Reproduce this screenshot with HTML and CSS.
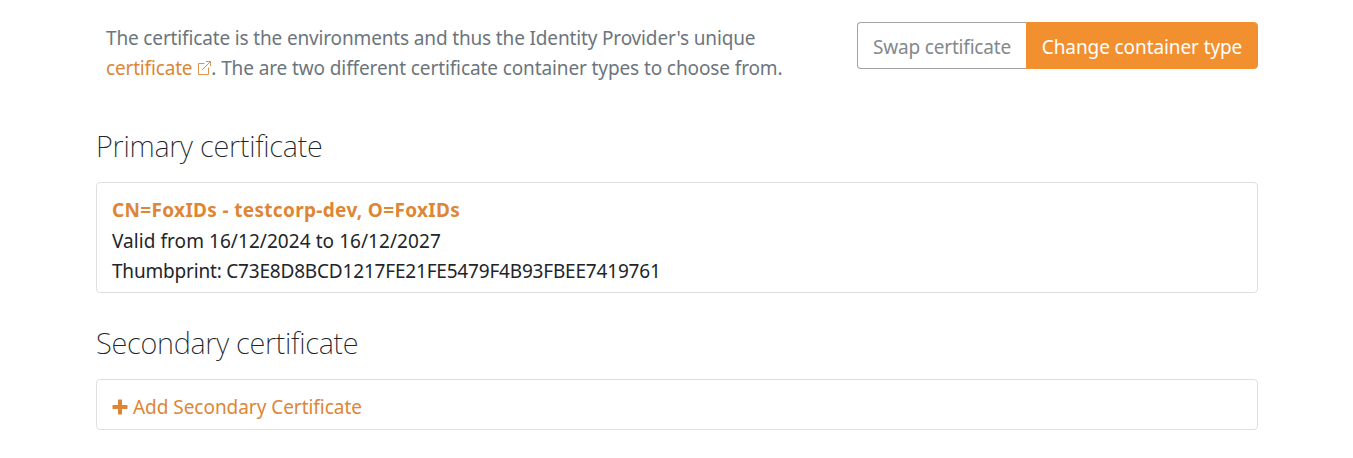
FILE: index.html
```html
<!DOCTYPE html>
<html lang="en">
<head>
<meta charset="utf-8">
<title>Certificates</title>
<link rel="stylesheet" href="styles.css">
</head>
<body>
<main class="page">
  <header class="intro">
    <p class="intro-text"><span class="lead">The certificate is the environments and thus the Identity Provider's unique</span><br><a class="link">certificate</a> <svg class="ext" viewBox="0 0 14 14" width="14" height="14"><path d="M7.5 2.5H1.500V13.500H11.500V6.500M9 .5H13.500V5M13.500 .5L5 9" fill="none" stroke="currentColor" stroke-width=".9" stroke-linejoin="round"/></svg><span class="rest">. The are two different certificate container types to choose from.</span></p>
    <div class="btn-group"><button class="btn btn-outline">Swap certificate</button><button class="btn btn-primary">Change container type</button></div>
  </header>
  <h2 class="title">Primary certificate</h2>
  <section class="card card-primary">
    <div class="name">CN=FoxIDs - testcorp-dev, O=FoxIDs</div>
    <div class="validity">Valid from 16/12/2024 to 16/12/2027</div>
    <div class="thumbprint">Thumbprint: C73E8D8BCD1217FE21FE5479F4B93FBEE7419761</div>
  </section>
  <h2 class="title second">Secondary certificate</h2>
  <section class="card card-add"><a class="add"><svg viewBox="0 0 16 16" width="16" height="16"><path d="M6.500 .5h3a.5.5 0 0 1 .5.5v5h5a.5.5 0 0 1 .5.5v3a.5.5 0 0 1-.5.5h-5v5a.5.5 0 0 1-.5.5h-3a.5.5 0 0 1-.5-.5v-5H1a.5.5 0 0 1-.5-.5v-3A.5.5 0 0 1 1 6h5V1a.5.5 0 0 1 .5-.5z" fill="currentColor"/></svg><span>Add Secondary Certificate</span></a></section>
</main>
</body>
</html>
```
FILE: styles.css
```css
* { box-sizing: border-box; }
body { margin: 0; background: #fff; color: #212529; font: 19px/30px "Noto Sans", "Open Sans", sans-serif; }
.page { width: 1162px; margin-left: 96px; padding-top: 22px; }
.intro { display: flex; justify-content: space-between; align-items: flex-start; height: 102px; }
.intro-text { margin: 0; padding: 1px 0 0 10px; color: #6c757d; white-space: nowrap; }
.lead { letter-spacing: -.15px; }
.rest { letter-spacing: -.11px; }
.link { letter-spacing: -.17px; }
.link, .ext, .name, .add { color: #dd8636; }
.btn-group { display: flex; width: 401px; height: 47px; }
.btn { font: inherit; padding: 2px 0 0; border: 1px solid #a0a2a4; color: #84888c; background: #fff; text-align: center; white-space: nowrap; }
.btn-outline { width: 169px; border-right: 0; border-radius: 4px 0 0 4px; letter-spacing: -.18px; }
.btn-primary { width: 232px; border-color: #f29030; color: #fff; background: #f29030; border-radius: 0 4px 4px 0; letter-spacing: -.1px; }
.title { margin: 0; font-size: 29px; font-weight: 250; line-height: 43px; height: 58px; letter-spacing: -.26px; }
.card { border: 1px solid #dfdfdf; border-radius: 4px; padding: 12px 15px; }
.card-primary { height: 111px; }
.name { font-weight: 700; height: 31px; letter-spacing: .33px; }
.validity { letter-spacing: .06px; }
.thumbprint { letter-spacing: -.19px; }
.second { margin-top: 28px; letter-spacing: -.28px; }
.card-add { height: 51px; }
.add { display: flex; align-items: center; gap: 5px; letter-spacing: -.04px; }
```
